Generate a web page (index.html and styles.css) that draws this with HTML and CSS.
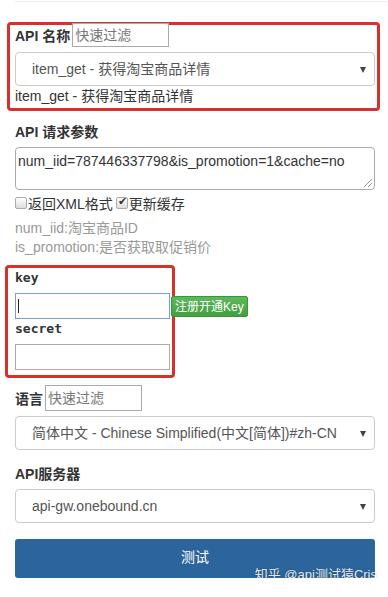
FILE: index.html
```html
<!doctype html>
<html lang="zh-CN">
<head>
	<meta charset="UTF-8">
	<title>API 测试</title>
	<link rel="stylesheet" href="styles.css">
</head>
<body>
	<div class="top-line"></div>
	<form class="api-form">
		<div class="mark mark-name">
			<div class="label-row">
				<label class="label">API 名称</label>
				<input class="filter" type="text" placeholder="快速过滤">
			</div>
			<div class="select"><span>item_get - 获得淘宝商品详情</span><i class="caret"></i></div>
			<p class="chosen">item_get - 获得淘宝商品详情</p>
		</div>

		<label class="label block">API 请求参数</label>
		<div class="textarea">num_iid=787446337798&amp;is_promotion=1&amp;cache=no<i class="grip"></i></div>
		<div class="checks">
			<label><input type="checkbox">返回XML格式</label>
			<label><input type="checkbox" checked>更新缓存</label>
		</div>
		<p class="help">num_iid:淘宝商品ID</p>
		<p class="help">is_promotion:是否获取取促销价</p>

		<div class="mark mark-key">
			<label class="mono">key</label>
			<div class="key-row">
				<div class="input focus"><i class="cursor"></i></div>
				<a href="#" class="btn-green">注册开通Key</a>
			</div>
			<label class="mono">secret</label>
			<div class="input"></div>
		</div>

		<div class="label-row lang-row">
			<label class="label">语言</label>
			<input class="filter" type="text" placeholder="快速过滤">
		</div>
		<div class="select"><span>简体中文 - Chinese Simplified(中文[简体])#zh-CN</span><i class="caret"></i></div>

		<label class="label block server">API服务器</label>
		<div class="select"><span>api-gw.onebound.cn</span><i class="caret"></i></div>

		<div class="btn-test">测试<span class="watermark">知乎 @api测试猿Cris</span></div>
	</form>
</body>
</html>
```

FILE: styles.css
```css
*{margin: 0;padding: 0;box-sizing: border-box;}
body{background: #fff;font-family: "Liberation Sans", Arial, "Noto Sans CJK SC", sans-serif;font-size: 14px;color: #333;}
.top-line{height: 1px;margin: 1px 0 0 15px;background: #eee;}
.api-form{width: 360px;margin-left: 15px;padding-top: 20px;}

/*red marks*/
.mark{border: 3px solid #d8312b;border-radius: 4px;}
.mark-name{margin: 0 -5px 0 -8px;padding: 0 2px 2px 5px;}
.mark-key{width: 170px;margin: 8px 0 0 -10px;padding: 0 2px 5px 7px;}

.label-row{display: flex;align-items: center;height: 22px;margin-top: -1px;}
.label{font-weight: bold;font-size: 14px;color: #333;}
.label.block{display: block;height: 20px;line-height: 20px;margin-top: 11px;}
.filter{width: 97px;height: 24px;margin-left: 2px;border: 1px solid #aaa;padding: 0 2px;font: 14px "Liberation Sans", "Noto Sans CJK SC", sans-serif;color: #555;outline: none;}
.filter::placeholder{color: #777;}

.select{position: relative;height: 34px;margin-top: 6px;border: 1px solid #ccc;border-radius: 4px;padding-left: 16px;line-height: 32px;color: #555;font-size: 14px;white-space: nowrap;}
.caret{position: absolute;right: 8px;top: 14px;border-left: 3px solid transparent;border-right: 3px solid transparent;border-top: 6px solid #444;}
.chosen{height: 20px;line-height: 20px;color: #333;}

.textarea{position: relative;height: 43px;margin-top: 5px;border: 1px solid #aaa;border-radius: 4px;padding: 3px 2px;line-height: 20px;color: #333;}
.grip{position: absolute;right: 2px;bottom: 2px;width: 8px;height: 8px;background: linear-gradient(135deg, transparent 45%, #999 45%, #999 52%, transparent 52%, transparent 70%, #999 70%, #999 77%, transparent 77%);}

.checks{display: flex;height: 19px;align-items: center;margin-top: 3px;}
.checks label{display: flex;align-items: center;margin-right: 3px;}
.checks input{appearance: none;-webkit-appearance: none;width: 12px;height: 12px;margin-right: 1px;border: 1px solid #aaa;border-radius: 2px;background: linear-gradient(#fff, #ddd);position: relative;}
.checks input:checked::after{content: "\2714";position: absolute;left: 1px;top: -3px;font-size: 11px;color: #333;}

.help{height: 19px;line-height: 19px;color: #999;}
.help:first-of-type{margin-top: 7px;}

.mono{display: block;height: 20px;line-height: 20px;font-family: "DejaVu Sans Mono", monospace;font-weight: bold;font-size: 13px;color: #333;}
.key-row{display: flex;align-items: center;width: 240px;margin-top: 5px;}
.input{width: 155px;height: 26px;border: 1px solid #aaa;flex-shrink: 0;}
.mark-key .mono + .input{margin-top: 5px;}
.input.focus{border-color: #7a9ad8;padding: 5px 0 0 2px;}
.cursor{display: block;width: 1px;height: 14px;background: #222;}
.btn-green{display: block;position: relative;z-index: 1;margin-left: 1px;height: 21px;padding: 0 3px;line-height: 20px;background: linear-gradient(#5db95c, #429f42);border: 1px solid #3b953b;border-radius: 2px;color: #fff;font-size: 12px;text-decoration: none;white-space: nowrap;}

.lang-row{margin-top: 7px;height: 26px;}
.lang-row .filter{width: 97px;height: 26px;}
.lang-row + .select{margin-top: 5px;}
.label.server{margin-top: 14px;}
.server + .select{margin-top: 5px;}

.btn-test{position: relative;height: 39px;margin-top: 16px;background: #2c659b;border-radius: 3px;color: #fff;text-align: center;line-height: 37px;font-size: 14px;}
.watermark{position: absolute;right: -2px;top: 26px;line-height: 20px;font-size: 13px;color: rgba(255,255,255,.9);text-shadow: 0 0 2px rgba(0,0,0,.35);white-space: nowrap;}
```
